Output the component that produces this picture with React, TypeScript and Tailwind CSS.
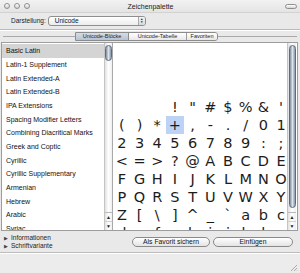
import React from "react";

const BLOCKS = [
  "Basic Latin",
  "Latin-1 Supplement",
  "Latin Extended-A",
  "Latin Extended-B",
  "IPA Extensions",
  "Spacing Modifier Letters",
  "Combining Diacritical Marks",
  "Greek and Coptic",
  "Cyrillic",
  "Cyrillic Supplementary",
  "Armenian",
  "Hebrew",
  "Arabic",
  "Syriac",
];

// codes 0..109, control chars stay empty
const CHARS = Array.from({ length: 110 }, (_, i) =>
  i < 32 || i === 127 ? "" : String.fromCharCode(i)
);

const Light = () => (
  <span className="w-[6px] h-[6px] rounded-full border border-[#8e8e8e] bg-gradient-to-b from-white to-[#cfcfcf]" />
);

const Scroller = ({ thumb, width }: { thumb: string; width: string }) => (
  <div className={`${width} flex flex-col border-l border-[#c4c4c4] bg-gradient-to-r from-[#e2e2e2] via-white to-[#efefef]`}>
    {/* Track */}
    <div className="flex-1 flex justify-center pt-[2px]">
      <div
        className={`${thumb} w-[7px] rounded-full border border-[#5c6b7d] bg-gradient-to-r from-[#7f8ea1] via-[#dde3ea] to-[#8796a8]`}
      />
    </div>
    {/* Arrows */}
    <div className="h-[9px] flex items-center justify-center border-t border-[#b9b9b9] text-[5px] leading-none text-[#222]">
      ▲
    </div>
    <div className="h-[9px] flex items-center justify-center border-t border-[#d0d0d0] text-[5px] leading-none text-[#222]">
      ▼
    </div>
  </div>
);

const App = () => {
  return (
    <div className="w-[300px] h-[273px] flex flex-col overflow-hidden bg-[#e9e9e9] font-['Liberation_Sans',Arial,sans-serif] text-[#111]">
      {/* Title bar */}
      <div className="h-[13px] flex items-center px-[4px] bg-gradient-to-b from-[#f2f2f2] to-[#e4e4e4] border-b border-[#d2d2d2]">
        <div className="w-[60px] flex gap-[4px]">
          <Light />
          <Light />
          <Light />
        </div>
        <div className="flex-1 text-center text-[7px] leading-none text-[#222]">
          Zeichenpalette
        </div>
        <div className="w-[60px] flex justify-end mr-[-1px]">
          <span className="w-[12px] h-[5px] rounded-full border border-[#8e8e8e] bg-gradient-to-b from-white to-[#d4d4d4]" />
        </div>
      </div>

      {/* Toolbar */}
      <div className="h-[17px] flex items-center pl-[11px] gap-[2px] border-b border-[#b9b9b9]">
        <span className="text-[6.5px] leading-none text-[#222]">Darstellung:</span>
        <div className="w-[98px] h-[10px] flex items-center rounded-[3px] border border-[#8f8f8f] bg-gradient-to-b from-white to-[#ececec] pl-[6px]">
          <span className="flex-1 text-[6.5px] leading-none">Unicode</span>
          <span className="w-[7px] h-full flex flex-col items-center justify-center border-l border-[#a9a9a9] text-[3px] leading-[3px] bg-gradient-to-b from-[#f4f4f4] to-[#d8d8d8] rounded-r-[2px]">
            <span>▲</span>
            <span>▼</span>
          </span>
        </div>
      </div>

      {/* Tabs */}
      <div className="h-[12px] flex items-center pl-[3px] pr-[3px] border-t border-white">
        <div className="w-[72px] h-px bg-[#a9a9a9]" />
        <div className="h-[9px] flex text-[5.5px] leading-none text-[#222] border border-[#8c8c8c] rounded-r-[3px] overflow-hidden">
          <div className="w-[53px] flex items-center justify-center bg-gradient-to-b from-[#d5dde8] to-[#b6c3d3] border-r border-[#8c8c8c]">
            Unicode-Blöcke
          </div>
          <div className="w-[58px] flex items-center justify-center bg-gradient-to-b from-white to-[#e8e8e8] border-r border-[#9c9c9c]">
            Unicode-Tabelle
          </div>
          <div className="w-[30px] flex items-center justify-center bg-gradient-to-b from-white to-[#e8e8e8]">
            Favoriten
          </div>
        </div>
        <div className="flex-1 h-px bg-[#a9a9a9]" />
      </div>

      {/* Content */}
      <div className="h-[189px] ml-[1px] mr-[2px] flex border border-[#9d9d9d] bg-white">
        {/* Block list */}
        <div className="w-[102px] pt-[1px] overflow-hidden">
          {BLOCKS.map((b, i) => (
            <div
              key={b}
              className={`h-[13.67px] flex items-center pl-[4px] text-[7px] leading-none whitespace-nowrap ${
                i === 0 ? "bg-[#d4d4d4]" : ""
              }`}
            >
              {b}
            </div>
          ))}
        </div>
        <Scroller thumb="h-[16px]" width="w-[8px]" />

        {/* Character grid */}
        <div className="w-[175px] pt-[1px] border-l border-[#a9a9a9] overflow-hidden">
          <div className="w-[177px] grid grid-cols-[repeat(10,17.7px)] font-['DejaVu_Sans',sans-serif] text-[14.5px] leading-none text-[#1c1c1c]">
            {CHARS.map((c, i) => (
              <div
                key={i}
                className={`h-[18px] flex items-center justify-center ${
                  i === 43 ? "bg-[#bcd3f5]" : ""
                }`}
              >
                {c}
              </div>
            ))}
          </div>
        </div>
        <Scroller thumb="h-[163px]" width="w-[9px]" />
      </div>

      {/* Bottom */}
      <div className="h-[22px] flex border-b border-[#bdbdbd]">
        <div className="w-[130px] pt-[3px] pl-[4px] flex flex-col text-[6.5px] leading-none text-[#222]">
          <div className="h-[8px] flex items-center gap-[3px]">
            <span className="text-[5px] text-[#444]">▶</span>
            Informationen
          </div>
          <div className="h-[8px] flex items-center gap-[3px]">
            <span className="text-[5px] text-[#444]">▶</span>
            Schriftvariante
          </div>
        </div>
        <div className="flex gap-[3px] pt-[6px] pl-[2px]">
          <button className="w-[78px] h-[10px] rounded-full border border-[#8a8a8a] bg-gradient-to-b from-white to-[#e4e4e4] text-[6.8px] leading-none text-[#111]">
            Als Favorit sichern
          </button>
          <button className="w-[80px] h-[10px] rounded-full border border-[#8a8a8a] bg-gradient-to-b from-white to-[#e4e4e4] text-[6.8px] leading-none text-[#111]">
            Einfügen
          </button>
        </div>
      </div>
      <div className="flex-1 flex items-end justify-end pr-[2px] pb-[1px] bg-[#ececec] border-t border-white">
        <svg width="9" height="9" viewBox="0 0 9 9">
          <path d="M8 2 L2 8 M8 5 L5 8 M8 7.5 L7.5 8" stroke="#9a9a9a" strokeWidth="0.8" />
        </svg>
      </div>
    </div>
  );
};

export default App;
